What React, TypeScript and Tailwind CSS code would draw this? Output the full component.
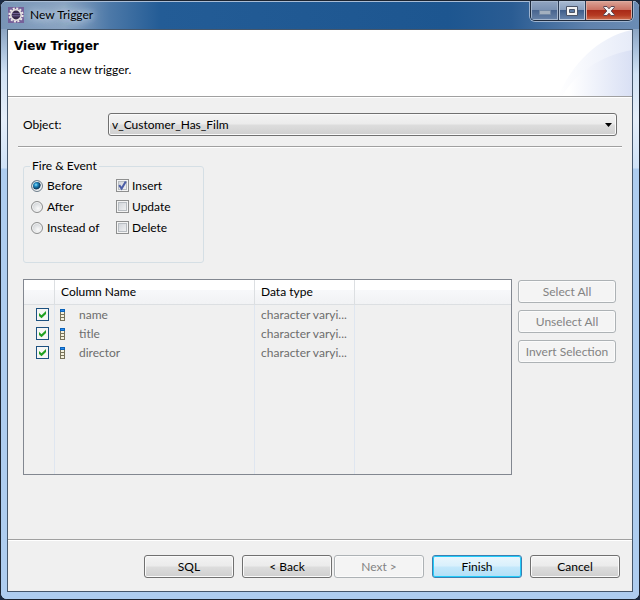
import React, { useState } from "react";

const columns = [
  { name: "name", type: "character varyi..." },
  { name: "title", type: "character varyi..." },
  { name: "director", type: "character varyi..." },
];

function DialogButton({
  children,
  variant = "normal",
  className = "",
}: {
  children: React.ReactNode;
  variant?: "normal" | "primary" | "disabled";
  className?: string;
}) {
  const looks = {
    normal:
      "border-[#707070] text-black bg-[linear-gradient(#f3f3f3,#ebebeb_48%,#dddddd_52%,#cfcfcf)] shadow-[inset_0_0_0_1px_#fafafa]",
    primary:
      "border-[#3c7fb1] text-black bg-[linear-gradient(#eaf6fd,#d9f0fc_48%,#c4e8fb_52%,#b0dff7)] shadow-[inset_0_0_0_1px_#22ccfa]",
    disabled: "border-[#adb2b5] text-[#838383] bg-[#f4f4f4] shadow-[inset_0_0_0_1px_#fbfbfb]",
  };
  return (
    <button
      type="button"
      disabled={variant === "disabled"}
      className={`flex h-[23px] shrink-0 items-center justify-center rounded-[3px] border whitespace-nowrap ${looks[variant]} ${className}`}
    >
      {children}
    </button>
  );
}

function Radio({ label, checked, onChange }: { label: string; checked: boolean; onChange: () => void }) {
  return (
    <label className="flex h-[21px] items-center gap-1">
      <input
        type="radio"
        name="fire"
        checked={checked}
        onChange={onChange}
        className="size-3 appearance-none rounded-full border border-[#8e8f8f] bg-[radial-gradient(circle_at_60%_65%,#fafafa,#d2d5d8_70%)] shadow-[inset_0_0_0_1px_#f4f4f4] checked:border-[#6f7f8c] checked:bg-[radial-gradient(circle_at_40%_38%,#8fe0f8_0,#1f8cc4_20%,#0b3558_50%,#d8dde0_58%)]"
      />
      {label}
    </label>
  );
}

function EventCheck({ label, initial }: { label: string; initial: boolean }) {
  const [on, setOn] = useState(initial);
  return (
    <label className="flex h-[21px] items-center gap-[3px]">
      <span className="relative size-[13px]">
        <input
          type="checkbox"
          checked={on}
          onChange={() => setOn(!on)}
          className="block size-[13px] appearance-none border border-[#8e8f8f] bg-[linear-gradient(135deg,#cbcfd5,#f6f6f6)] shadow-[inset_0_0_0_1px_#f4f4f4,inset_0_0_0_2px_#b8bdc2]"
        />
        {on && (
          <svg viewBox="0 0 13 13" className="pointer-events-none absolute inset-0 size-[13px]" aria-hidden="true">
            <path d="M3.2 6.2 5.6 9.6 9.8 2.6" fill="none" stroke="#4b5da6" strokeWidth="2" />
          </svg>
        )}
      </span>
      {label}
    </label>
  );
}

function ColumnRow({ name, type }: { name: string; type: string }) {
  const [on, setOn] = useState(true);
  return (
    <tr className="h-[19px] text-[#6d6d6d]">
      <td className="border-r border-[#dfe6f0] pl-3">
        <span className="relative block size-[13px]">
          <input
            type="checkbox"
            aria-label={name}
            checked={on}
            onChange={() => setOn(!on)}
            className="block size-[13px] appearance-none border border-[#1c5180] bg-[#f6f6f4]"
          />
          {on && (
            <svg viewBox="0 0 13 13" className="pointer-events-none absolute inset-0 size-[13px]" aria-hidden="true">
              <path d="M3 5v3l2.5 2.3L10 6V3L5.5 7.3Z" fill="#21a121" />
            </svg>
          )}
        </span>
      </td>
      <td className="border-r border-[#dfe6f0] pl-[5px]">
        <div className="flex items-center">
          <svg width="5" height="12" viewBox="0 0 5 12" shapeRendering="crispEdges" className="mr-[14px]" aria-hidden="true">
            <path d="M0 0h5v12H0z" fill="#77725a" />
            <path d="M0 0h5v3H0z" fill="#0b62b8" />
            <path d="M1 1h3v1H1z" fill="#2c8cf0" />
            <path d="M1 3h3v2H1zM1 6h3v2H1zM1 9h3v2H1z" fill="#f4f0dc" />
          </svg>
          {name}
        </div>
      </td>
      <td className="border-r border-[#dfe6f0] pl-[6px] whitespace-nowrap">{type}</td>
      <td />
    </tr>
  );
}

function CaptionButtons() {
  return (
    <div className="mr-[6px] flex h-5 w-[103px] shrink-0 self-start overflow-hidden rounded-b-[5px] border border-t-0 border-[#1e2a3c] shadow-[0_0_0_1px_#9fb4cf]">
      <button
        type="button"
        aria-label="Minimize"
        className="flex w-7 items-center justify-center border-r border-[#2b3b55] bg-[linear-gradient(#91a5c1,#7b92b3_45%,#49658f_50%,#6883a8)] pt-1 shadow-[inset_0_0_0_1px_#a5b6cd]"
      >
        <svg width="12" height="5" viewBox="0 0 12 5" aria-hidden="true">
          <path d="M.5.5h11v4H.5z" fill="#a3b0bf" stroke="#7389a5" />
        </svg>
      </button>
      <button
        type="button"
        aria-label="Maximize"
        className="flex w-[27px] items-center justify-center border-r border-[#2b3b55] bg-[linear-gradient(#a9bbd3,#8aa0bf_45%,#3f5e8b_50%,#6b87ae)] shadow-[inset_0_0_0_1px_#b5c5da]"
      >
        <svg width="12" height="10" viewBox="0 0 12 10" aria-hidden="true">
          <path d="M.5.5h11v9H.5z" fill="#f4f4f4" stroke="#4b5468" />
          <path d="M3.5 3.5h5v3h-5z" fill="#5b7aa5" stroke="#4b5468" />
        </svg>
      </button>
      <button
        type="button"
        aria-label="Close"
        className="flex flex-1 items-center justify-center bg-[linear-gradient(#dba497,#ca7364_45%,#a92a18_50%,#b53a22_75%,#cf7150)] shadow-[inset_0_0_0_1px_#dfaca0]"
      >
        <svg width="12" height="10" viewBox="0 0 12 10" aria-hidden="true">
          <path
            d="M.7.5H4L6 2.8 8 .5h3.3v1L8.2 5l3.1 3.5v1H8L6 7.2 4 9.5H.7v-1L3.8 5 .7 1.5Z"
            fill="#f6f6f6"
            stroke="#5c4652"
          />
        </svg>
      </button>
    </div>
  );
}

export default function App() {
  const [fire, setFire] = useState("Before");

  return (
    <div className="flex min-h-screen bg-[#1b2b43] font-['Lato','Open_Sans',sans-serif] text-[12px] leading-4 text-black">
      <div className="flex min-w-0 flex-1 flex-col overflow-hidden rounded-[7px] border border-[#1c2430] bg-[#aecdf0] shadow-[inset_0_0_0_1px_#d8e8f8]">
        <header className="flex h-[28px] items-center bg-[linear-gradient(90deg,#7894b6,#8ba4c2_10%,#4d79a8_17%,#235c96_25%,#1d5690_70%,#2a5c93_80%,#5f82ad_92%,#6b8cb4)] pl-[7px] shadow-[inset_0_1px_0_#a9bdd6]">
          <svg width="16" height="16" viewBox="0 0 16 16" aria-hidden="true">
            <path d="M0 0h16v16H0z" fill="#75609a" />
            <circle cx="8" cy="8" r="6.6" fill="none" stroke="#eeeae8" strokeWidth="2" strokeDasharray="2 1.456" />
            <circle cx="8" cy="8" r="5.2" fill="#352849" stroke="#e8e4e4" strokeWidth="1.6" />
            <path d="M4 6.6h8M4 8.8h8" stroke="#75679a" />
          </svg>
          <h1 className="flex-1 pl-[6px] [text-shadow:0_0_6px_#c9d8e8,0_0_10px_#c9d8e8,0_0_14px_#b4c8de]">New Trigger</h1>
          <CaptionButtons />
        </header>

        <div className="flex flex-1 bg-[linear-gradient(#8ba4c2,#a9c0db_20px,#d2e2f4_45px,#e4eefa_90px,#d0e2f6_139px,#aecdf0_140px)] px-[6px] pb-[7px]">
          <div className="flex min-w-0 flex-1 flex-col border border-[#44566b] bg-[#f0f0f0]">
            <section className="relative h-[67px] overflow-hidden border-b border-[#a0a0a0] bg-white pt-2 shadow-[0_1px_0_#fff]">
              <svg width="80" height="67" viewBox="0 0 80 67" className="absolute right-0 bottom-0" aria-hidden="true">
                <defs>
                  <linearGradient id="sweepOuter">
                    <stop offset="0" stopColor="#fff" />
                    <stop offset="1" stopColor="#e6ebf8" />
                  </linearGradient>
                  <linearGradient id="sweepInner">
                    <stop offset="0.1" stopColor="#fff" />
                    <stop offset="1" stopColor="#d9e0f4" />
                  </linearGradient>
                </defs>
                <path d="M6 67C20 36 45 8 80 1v66Z" fill="url(#sweepOuter)" />
                <path d="M10 67C24 44 47 27 80 21v46Z" fill="url(#sweepInner)" />
              </svg>
              <h2 className="relative pl-[6px] font-['DejaVu_Sans','Liberation_Sans',sans-serif] text-[12px] font-bold">View Trigger</h2>
              <p className="relative mt-2 pl-[14px]">Create a new trigger.</p>
            </section>

            <main className="flex-1 px-[10px] pt-4">
              <div className="flex items-center px-[5px]">
                <label htmlFor="object" className="w-[85px] shrink-0">
                  Object:
                </label>
                <span className="relative min-w-0 flex-1">
                  <select
                    id="object"
                    className="block h-[23px] w-full appearance-none rounded-[3px] border border-[#707070] bg-[linear-gradient(#f3f3f3,#ebebeb_48%,#dddddd_52%,#cfcfcf)] pl-[3px] shadow-[inset_0_0_0_1px_#fafafa]"
                  >
                    <option>v_Customer_Has_Film</option>
                  </select>
                  <svg width="7" height="4" viewBox="0 0 7 4" className="pointer-events-none absolute top-[10px] right-[5px]" aria-hidden="true">
                    <path d="M0 0h7L3.5 4Z" fill="#000" />
                  </svg>
                </span>
              </div>

              <hr className="mt-[10px] border-t border-[#a0a0a0] shadow-[0_1px_0_#fff]" />

              <div className="px-[5px] pt-[11px]">
                <fieldset className="h-[105px] w-[181px] rounded-[3px] border border-[#d5dfe5] px-[7px] shadow-none">
                  <legend className="-ml-px px-[2px]">Fire &amp; Event</legend>
                  <div className="flex pt-px">
                    <div className="w-[85px]">
                      {["Before", "After", "Instead of"].map((f) => (
                        <Radio key={f} label={f} checked={fire === f} onChange={() => setFire(f)} />
                      ))}
                    </div>
                    <div>
                      <EventCheck label="Insert" initial />
                      <EventCheck label="Update" initial={false} />
                      <EventCheck label="Delete" initial={false} />
                    </div>
                  </div>
                </fieldset>

                <div className="mt-4 flex gap-[6px]">
                  <div className="h-[196px] min-w-0 flex-1 border border-[#828790]">
                    <table className="h-full w-full table-fixed border-separate border-spacing-0 text-left">
                      <colgroup>
                        <col className="w-[31px]" />
                        <col className="w-[200px]" />
                        <col className="w-[100px]" />
                        <col />
                      </colgroup>
                      <thead className="bg-[linear-gradient(#fff_40%,#f7f8fa_42%,#f1f2f4)]">
                        <tr className="h-[25px]">
                          <th className="border-r border-b border-[#dcdfe2]" />
                          <th className="border-r border-b border-[#dcdfe2] pl-[6px] font-normal">Column Name</th>
                          <th className="border-r border-b border-[#dcdfe2] pl-[6px] font-normal">Data type</th>
                          <th className="border-b border-[#dcdfe2]" />
                        </tr>
                      </thead>
                      <tbody>
                        {columns.map((c) => (
                          <ColumnRow key={c.name} name={c.name} type={c.type} />
                        ))}
                        <tr>
                          <td className="border-r border-[#dfe6f0]" />
                          <td className="border-r border-[#dfe6f0]" />
                          <td className="border-r border-[#dfe6f0]" />
                          <td />
                        </tr>
                      </tbody>
                    </table>
                  </div>
                  <div className="flex w-[99px] flex-col gap-[7px] pt-px pr-px">
                    <DialogButton variant="disabled">Select All</DialogButton>
                    <DialogButton variant="disabled">Unselect All</DialogButton>
                    <DialogButton variant="disabled">Invert Selection</DialogButton>
                  </div>
                </div>
              </div>
            </main>

            <footer className="flex h-[52px] justify-end border-t border-[#a0a0a0] pt-[15px] pr-3 shadow-[inset_0_1px_0_#fff]">
              <DialogButton className="mr-2 w-[90px]">SQL</DialogButton>
              <DialogButton className="mr-[2px] w-[90px]">&lt; Back</DialogButton>
              <DialogButton variant="disabled" className="mr-2 w-[90px]">
                Next &gt;
              </DialogButton>
              <DialogButton variant="primary" className="mr-2 w-[90px]">
                Finish
              </DialogButton>
              <DialogButton className="w-[90px]">Cancel</DialogButton>
            </footer>
          </div>
        </div>
      </div>
    </div>
  );
}
